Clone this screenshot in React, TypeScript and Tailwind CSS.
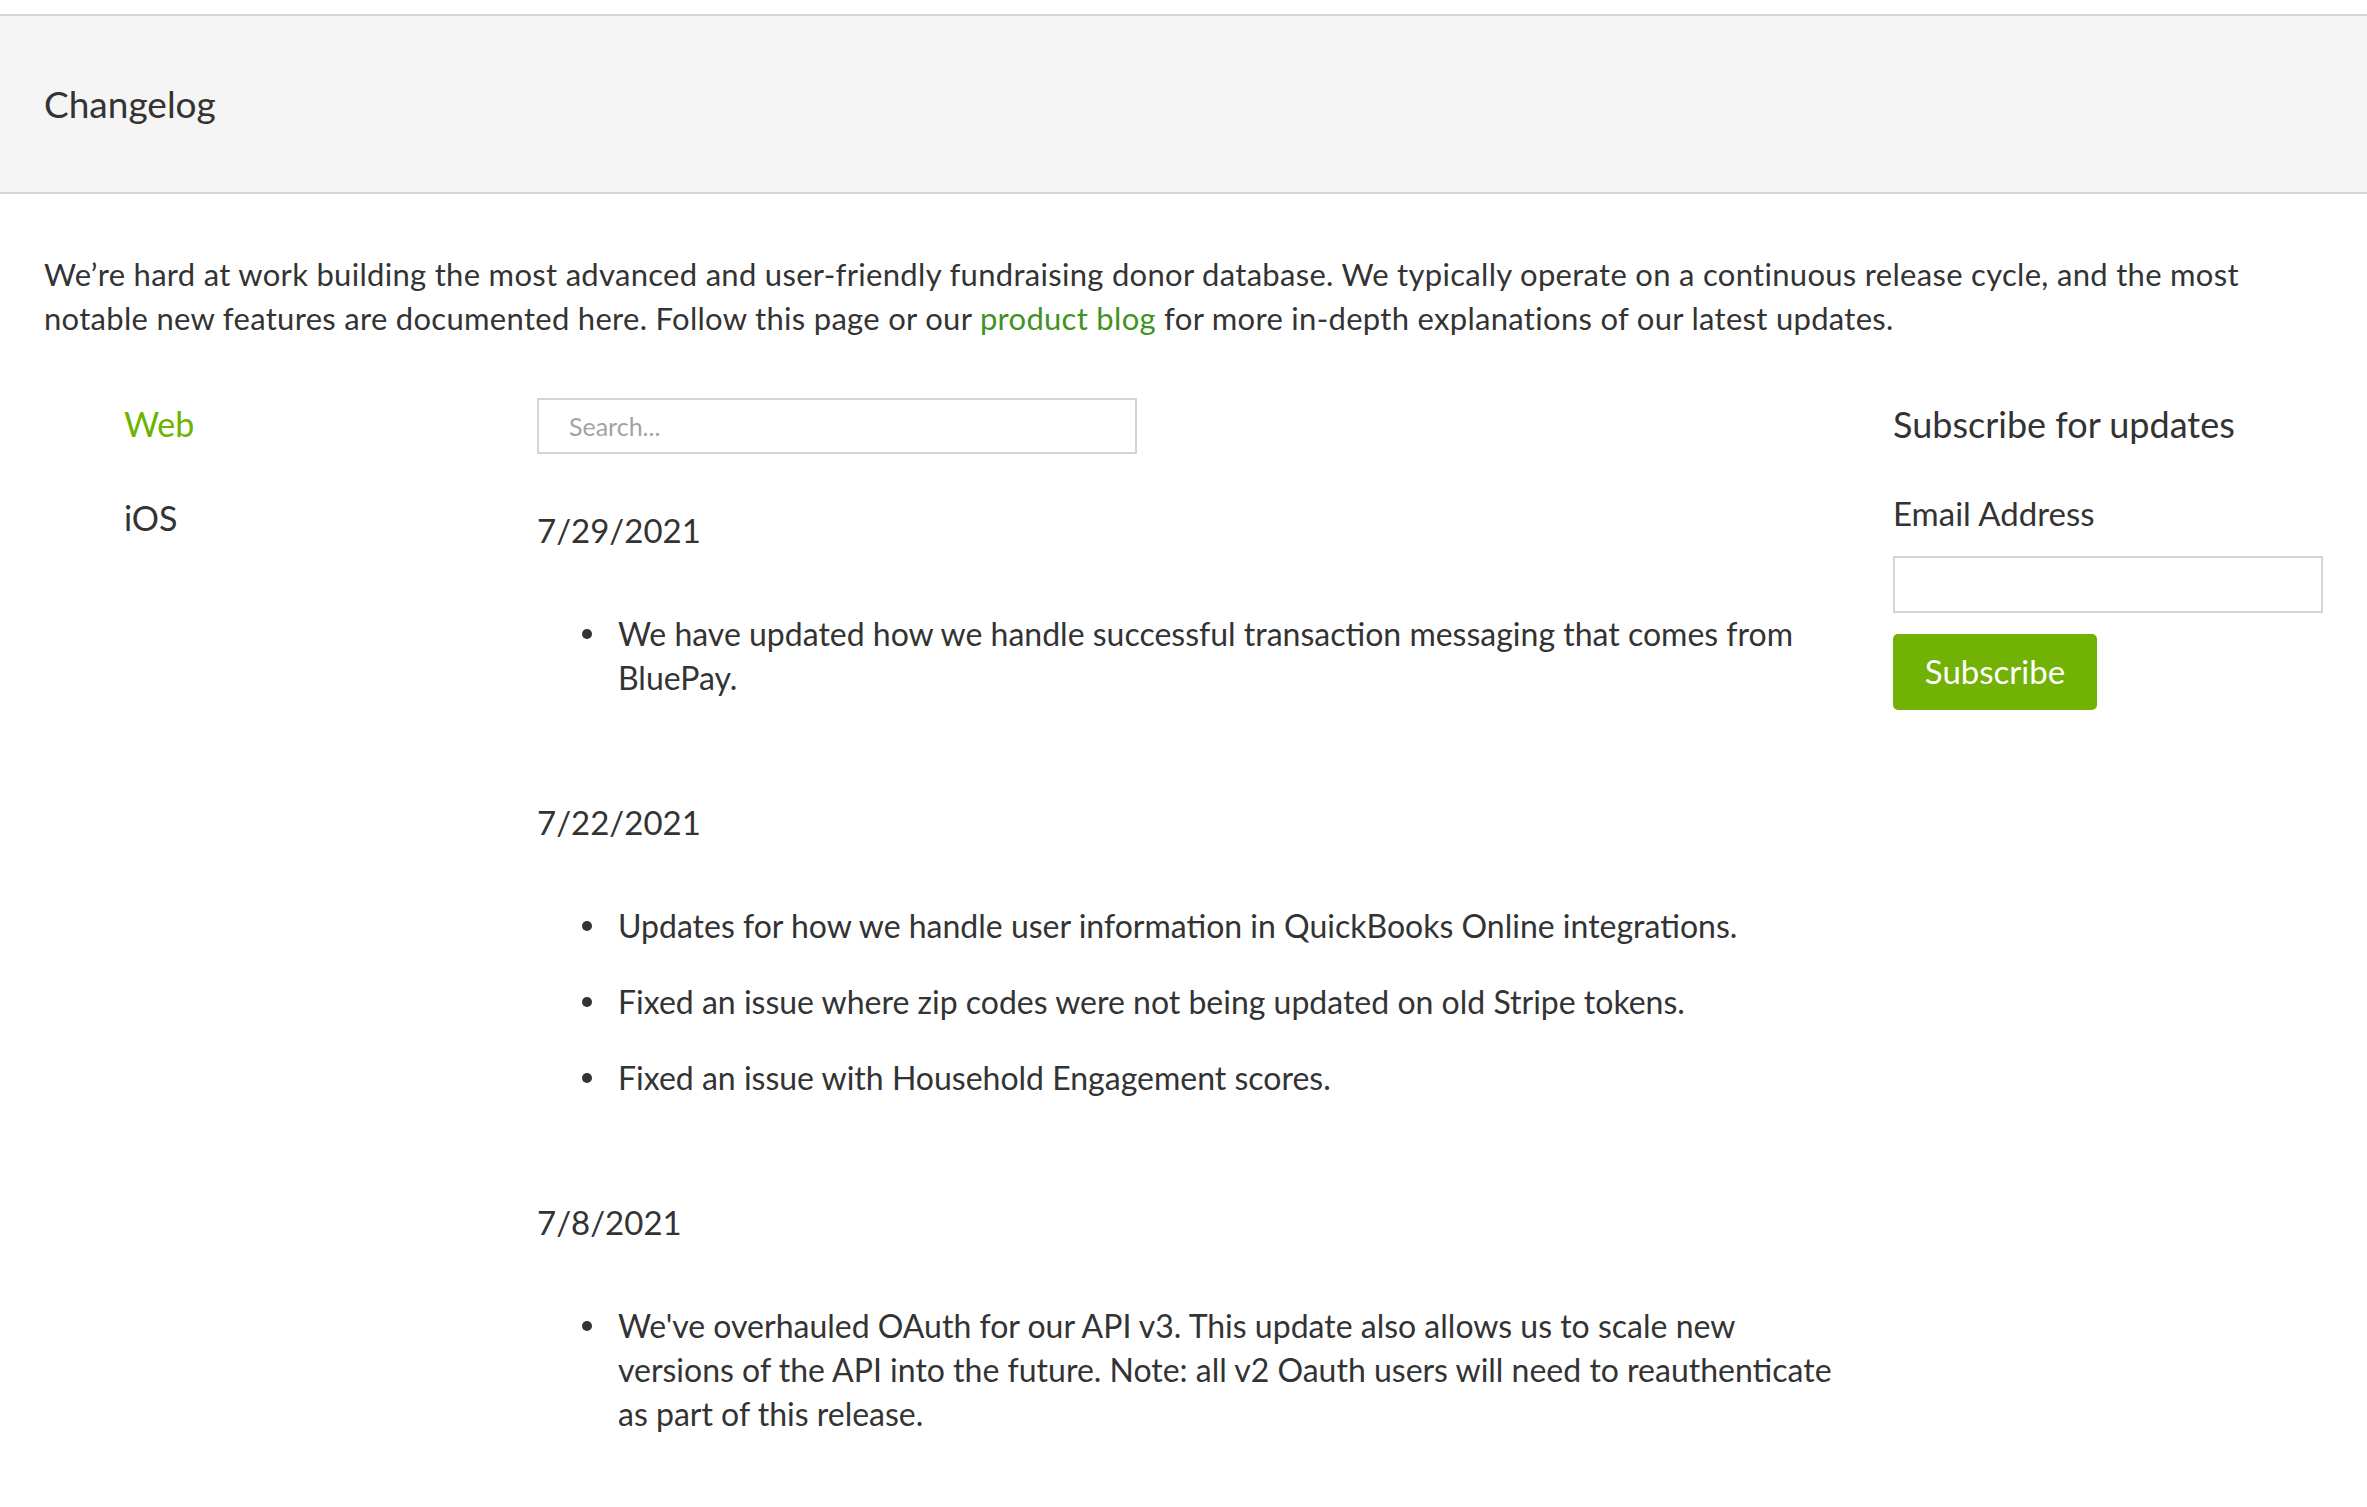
import React from 'react'

const releases = [
  {
    date: '7/29/2021',
    items: [
      'We have updated how we handle successful transaction messaging that comes from BluePay.',
    ],
  },
  {
    date: '7/22/2021',
    items: [
      'Updates for how we handle user information in QuickBooks Online integrations.',
      'Fixed an issue where zip codes were not being updated on old Stripe tokens.',
      'Fixed an issue with Household Engagement scores.',
    ],
  },
  {
    date: '7/8/2021',
    items: [
      "We've overhauled OAuth for our API v3. This update also allows us to scale new versions of the API into the future. Note: all v2 Oauth users will need to reauthenticate as part of this release.",
    ],
  },
]

export default function App() {
  return (
    <div className="min-h-screen bg-white text-[#333] font-['Lato','Liberation_Sans',sans-serif]">
      {/* header band */}
      <div className="pt-[14px]">
        <header className="h-[180px] border-y-2 border-[#d6d6d6] bg-[#f5f5f5] px-[44px] flex items-center">
          <h1 className="text-[37px] font-normal">Changelog</h1>
        </header>
      </div>

      <main className="px-[44px] pb-20">
        <p className="mt-[58px] text-[31px] leading-[44px] tracking-[0.3px]">
          We’re hard at work building the most advanced and user-friendly fundraising donor database. We typically operate on a continuous release cycle, and the most notable new features are documented here. Follow this page or our{' '}
          <a href="#" className="text-[#3f9322]">product blog</a> for more in-depth explanations of our latest updates.
        </p>

        <div className="mt-[58px] grid grid-cols-[493px_1fr_430px]">
          {/* platform nav */}
          <nav className="pl-[80px] pt-[4px] flex flex-col gap-[50px] text-[34px] leading-[44px]">
            <a href="#" className="text-[#6cb400]">Web</a>
            <a href="#" className="text-[#333]">iOS</a>
          </nav>

          {/* releases */}
          <div className="pr-[40px]">
            <input
              type="text"
              placeholder="Search..."
              className="w-[600px] h-[56px] border-2 border-[#d4d4d4] px-[30px] text-[25px] text-[#333] placeholder:text-[#a3a3a3] outline-none"
            />
            <div className="mt-[54px] flex flex-col gap-[100px]">
              {releases.map(r => (
                <section key={r.date}>
                  <h3 className="text-[33px] leading-[44px] font-normal">{r.date}</h3>
                  <ul className="mt-[60px] pl-[45px] flex flex-col gap-[32px]">
                    {r.items.map(it => (
                      <li key={it} className="flex text-[32px] leading-[44px]">
                        <div className="w-[36px] h-[44px] shrink-0 flex items-center">
                          <span className="w-[10px] h-[10px] rounded-full bg-[#333]" />
                        </div>
                        <span>{it}</span>
                      </li>
                    ))}
                  </ul>
                </section>
              ))}
            </div>
          </div>

          {/* subscribe */}
          <aside className="pt-[4px]">
            <h2 className="text-[36px] leading-[44px] font-normal">Subscribe for updates</h2>
            <label className="block mt-[45px] text-[33px] leading-[44px]">Email Address</label>
            <input type="email" className="mt-[21px] block w-full h-[57px] border-2 border-[#d4d4d4] outline-none" />
            <button className="mt-[21px] w-[204px] h-[76px] rounded-[5px] bg-[#71b204] text-white text-[33px]">
              Subscribe
            </button>
          </aside>
        </div>
      </main>
    </div>
  )
}
